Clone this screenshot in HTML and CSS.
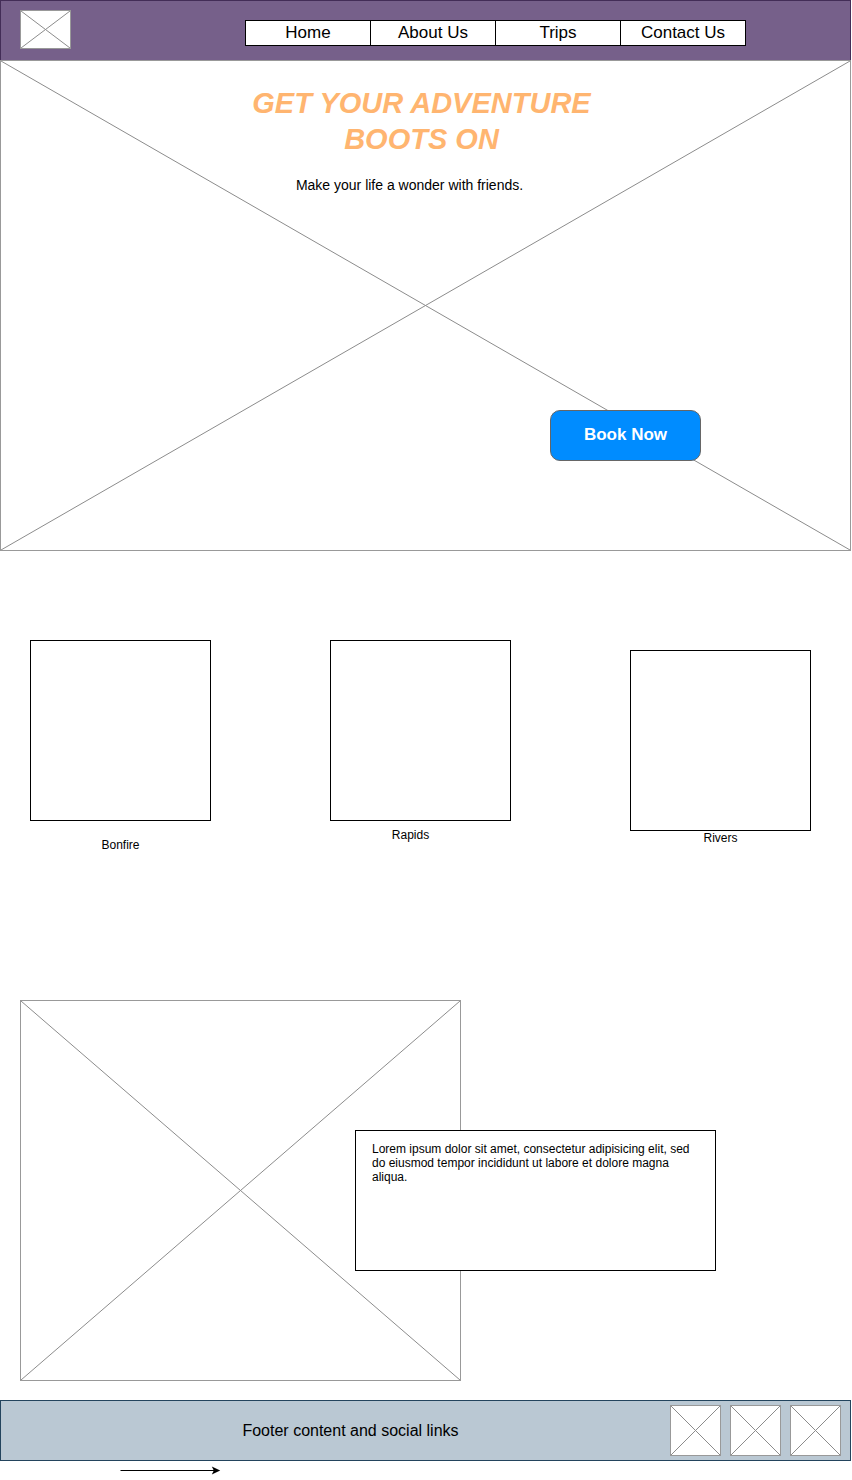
FILE: index.html
```html
<!DOCTYPE html>
<html lang="en">
<head>
<meta charset="utf-8">
<meta name="viewport" content="width=device-width, initial-scale=1">
<title>Adventure Boots</title>
<link rel="stylesheet" href="styles.css">
</head>
<body>
<header class="site-header">
  <a class="placeholder logo" href="#" aria-label="Logo"><svg class="cross" viewBox="0 0 100 100" preserveAspectRatio="none" aria-hidden="true"><path d="M0 0 100 100M100 0 0 100"/></svg></a>
  <nav class="main-nav">
    <a href="#">Home</a>
    <a href="#">About Us</a>
    <a href="#">Trips</a>
    <a href="#">Contact Us</a>
  </nav>
</header>
<main>
  <section class="placeholder hero">
    <svg class="cross" viewBox="0 0 100 100" preserveAspectRatio="none" aria-hidden="true"><path d="M0 0 100 100M100 0 0 100"/></svg>
    <h1 class="hero-title">GET YOUR ADVENTURE BOOTS ON</h1>
    <p class="hero-text">Make your life a wonder with friends.</p>
    <button class="book-button" type="button">Book Now</button>
  </section>
  <section class="trips">
    <figure class="trip trip-bonfire"><div class="trip-image"></div><figcaption>Bonfire</figcaption></figure>
    <figure class="trip trip-rapids"><div class="trip-image"></div><figcaption>Rapids</figcaption></figure>
    <figure class="trip trip-rivers"><div class="trip-image"></div><figcaption>Rivers</figcaption></figure>
  </section>
  <section class="about">
    <div class="placeholder about-image"><svg class="cross" viewBox="0 0 100 100" preserveAspectRatio="none" aria-hidden="true"><path d="M0 0 100 100M100 0 0 100"/></svg></div>
    <p class="about-card">Lorem ipsum dolor sit amet, consectetur adipisicing elit, sed do eiusmod tempor incididunt ut labore et dolore magna aliqua.</p>
  </section>
</main>
<footer class="site-footer">
  <p class="footer-text">Footer content and social links</p>
  <div class="social">
    <a class="placeholder social-link" href="#" aria-label="Social link 1"><svg class="cross" viewBox="0 0 100 100" preserveAspectRatio="none" aria-hidden="true"><path d="M0 0 100 100M100 0 0 100"/></svg></a>
    <a class="placeholder social-link" href="#" aria-label="Social link 2"><svg class="cross" viewBox="0 0 100 100" preserveAspectRatio="none" aria-hidden="true"><path d="M0 0 100 100M100 0 0 100"/></svg></a>
    <a class="placeholder social-link" href="#" aria-label="Social link 3"><svg class="cross" viewBox="0 0 100 100" preserveAspectRatio="none" aria-hidden="true"><path d="M0 0 100 100M100 0 0 100"/></svg></a>
  </div>
</footer>
<svg class="arrow" width="101" height="11" viewBox="0 0 101 11" aria-hidden="true"><path d="M0.5 5.5H94" stroke="#000"/><path d="M100.2 5.5 91.8 9.6 93.8 5.5 91.8 1.4Z"/></svg>
</body>
</html>
```

FILE: styles.css
```css
* {
  box-sizing: border-box;
}

body {
  margin: 0 1px 0 0;
  background: #fff;
  color: #000;
  font-family: "Liberation Sans", Arial, sans-serif;
  font-size: 12px;
  line-height: 14px;
}

h1, p, figure {
  margin: 0;
}

a {
  color: inherit;
  text-decoration: none;
}

.placeholder {
  position: relative;
  border: 1px solid #999;
  background: #fff;
}

.cross {
  position: absolute;
  inset: 0;
  width: 100%;
  height: 100%;
  fill: none;
  stroke: #8c8c8c;
}

.cross path {
  vector-effect: non-scaling-stroke;
}

.site-header {
  display: flex;
  justify-content: space-between;
  align-items: flex-start;
  gap: 20px;
  padding: 9px 104px 11px 19px;
  border: 1px solid #432d57;
  border-bottom: 0;
  background: #76608a;
}

.logo {
  flex: none;
  width: 51px;
  height: 39px;
}

.main-nav {
  display: grid;
  grid-template-columns: repeat(4, 1fr);
  flex: 0 1 501px;
  margin-top: 10px;
  border: 1px solid #000;
  border-left: 0;
  background: #fff;
  font-size: 17px;
  line-height: 24px;
  text-align: center;
}

.main-nav a {
  border-left: 1px solid #000;
}

.hero {
  display: flex;
  flex-direction: column;
  align-items: center;
  padding: 24px 0 89px;
}

.hero-title {
  position: relative;
  max-width: 360px;
  margin-right: 8px;
  color: #ffb570;
  font-size: 29px;
  font-style: italic;
  line-height: 36px;
  text-align: center;
}

.hero-text {
  position: relative;
  margin: 18px 32px 0 0;
  font-size: 14px;
  line-height: 20px;
}

.book-button {
  position: relative;
  align-self: flex-end;
  margin: 215px 149px 0 0;
  padding: 12px 32px 14px;
  min-width: 151px;
  border: 1px solid #666;
  border-radius: 10px;
  background: #008cff;
  color: #fff;
  font: bold 17px/23px "Liberation Sans", Arial, sans-serif;
}

.trips {
  display: flex;
  justify-content: space-between;
  align-items: flex-start;
  padding: 89px 40px 148px 30px;
}

.trip {
  flex: 0 1 181px;
  text-align: center;
}

.trip-image {
  aspect-ratio: 1;
  border: 1px solid #000;
}

.trip-bonfire figcaption {
  padding-top: 17px;
}

.trip-rapids figcaption {
  padding: 7px 20px 0 0;
}

.trip-rivers {
  margin-top: 10px;
}

.about {
  display: flex;
  align-items: center;
  padding: 0 20px;
}

.about-image {
  flex: 0 1 441px;
  height: 381px;
}

.about-card {
  position: relative;
  flex: 0 1 361px;
  min-height: 141px;
  margin: 20px 0 0 -106px;
  padding: 11px 16px;
  border: 1px solid #000;
  background: #fff;
}

.site-footer {
  display: flex;
  align-items: center;
  margin-top: 19px;
  padding: 4px 9px 4px 30px;
  border: 1px solid #23445d;
  background: #bac8d3;
}

.footer-text {
  flex: 1;
  font-size: 16px;
  line-height: 20px;
  text-align: center;
}

.social {
  display: flex;
  gap: 9px;
}

.social-link {
  width: 51px;
  height: 51px;
}

.arrow {
  display: block;
  margin: 4px 0 0 120px;
}
```
